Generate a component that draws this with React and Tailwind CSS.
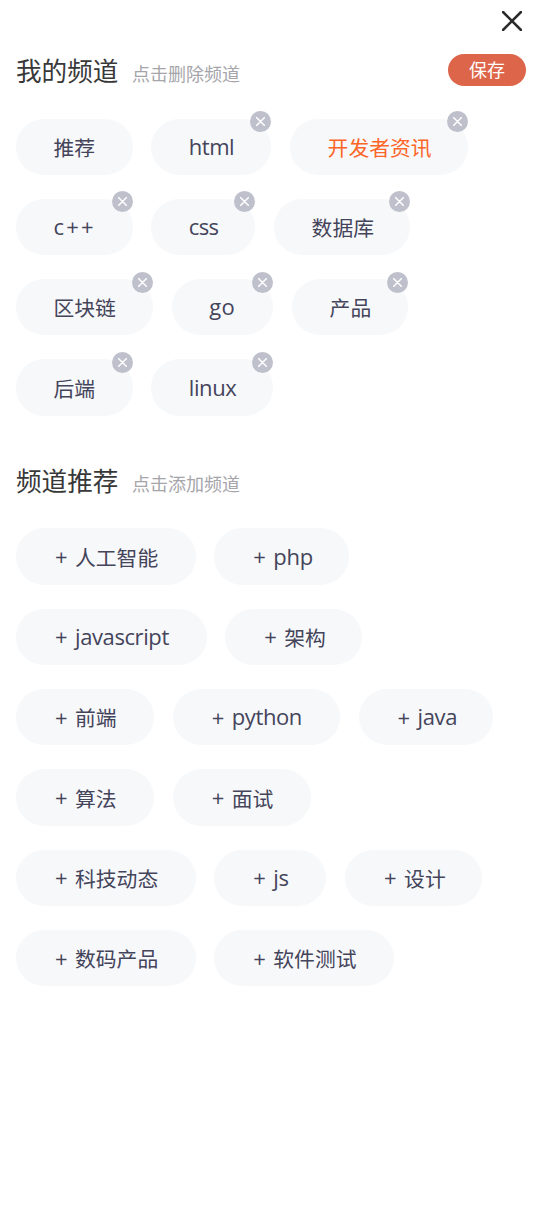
const mine = [
  [
    { name: '推荐', size: 'w-[116.5px]', fixed: true },
    { name: 'html', size: 'w-[120px]', latin: true, track: 'tracking-[-0.5px]' },
    { name: '开发者资讯', size: 'w-[177.5px]', active: true },
  ],
  [
    { name: 'c++', size: 'w-[116.5px]', latin: true, track: 'tracking-[2.2px]' },
    { name: 'css', size: 'w-[104px]', latin: true, track: 'tracking-[-0.6px]' },
    { name: '数据库', size: 'w-[136px]' },
  ],
  [
    { name: '区块链', size: 'w-[137px]' },
    { name: 'go', size: 'w-[101.5px]', latin: true, track: 'tracking-[0.3px]' },
    { name: '产品', size: 'w-[115.5px]' },
  ],
  [
    { name: '后端', size: 'w-[116.5px]' },
    { name: 'linux', size: 'w-[121.5px]', latin: true, track: 'tracking-[-0.4px]' },
  ],
];

const suggested = [
  [
    { name: '人工智能', size: 'w-[179.5px]' },
    { name: 'php', size: 'w-[135px]', latin: true, track: 'tracking-[-0.3px]' },
  ],
  [
    { name: 'javascript', size: 'w-[190.5px]', latin: true, track: 'tracking-[-0.4px]' },
    { name: '架构', size: 'w-[137px]' },
  ],
  [
    { name: '前端', size: 'w-[138px]' },
    { name: 'python', size: 'w-[167px]', latin: true, track: 'tracking-[-0.4px]' },
    { name: 'java', size: 'w-[134.5px]', latin: true, track: 'tracking-[-0.4px]' },
  ],
  [
    { name: '算法', size: 'w-[138px]' },
    { name: '面试', size: 'w-[138px]' },
  ],
  [
    { name: '科技动态', size: 'w-[179.5px]' },
    { name: 'js', size: 'w-[112px]', latin: true, track: 'tracking-[-0.3px]' },
    { name: '设计', size: 'w-[137px]' },
  ],
  [
    { name: '数码产品', size: 'w-[179.5px]' },
    { name: '软件测试', size: 'w-[179.5px]' },
  ],
];

function Cross({ className, width }) {
  return (
    <svg viewBox="0 0 20 20" className={className} fill="none" stroke="currentColor" strokeWidth={width} strokeLinecap="round">
      <path d="M1 1 19 19M19 1 1 19" />
    </svg>
  );
}

function Chip({ item, add }) {
  return (
    <button
      className={`relative flex h-[56.3px] shrink-0 items-center whitespace-nowrap rounded-full bg-[#f7f8fa] pl-[37.5px] text-left ${item.size} ${item.active ? 'text-[#fc6627]' : 'text-[#44445a]'}`}
    >
      {add && <span className="w-[21.5px] shrink-0 pb-px pl-[1.5px] text-[22px] leading-none">+</span>}
      <span className={`${item.latin ? 'pb-[2px] text-[22px]' : 'pt-[3px] text-[20.8px]'} leading-none ${item.track || ''}`}>{item.name}</span>
      {!add && !item.fixed && (
        <span className="absolute -top-[7.5px] right-0 flex size-[21px] items-center justify-center rounded-full bg-[#bec0cb] text-white">
          <Cross className="size-[9px]" width={3.2} />
        </span>
      )}
    </button>
  );
}

function Channels({ rows, add }) {
  return (
    <div className="flex flex-col gap-[24px]">
      {rows.map((row, i) => (
        <div key={i} className="flex gap-[18.8px]">
          {row.map((item) => (
            <Chip key={item.name} item={item} add={add} />
          ))}
        </div>
      ))}
    </div>
  );
}

function Heading({ title, hint }) {
  return (
    <div className="flex items-baseline gap-[13.5px]">
      <h2 className="text-[25.6px] leading-8 text-[#383838]">{title}</h2>
      <span className="text-[18px] leading-8 text-[#a5a5aa]">{hint}</span>
    </div>
  );
}

export default function App() {
  return (
    <div className="h-[1216px] w-[533px] overflow-hidden bg-white font-['Open_Sans','Noto_Sans_CJK_SC',sans-serif] font-normal">
      <header className="flex h-[53px] justify-end pr-[11px] pt-[10.5px] text-[#2b2b2d]">
        <button className="size-5">
          <Cross className="size-5" width={2.5} />
        </button>
      </header>
      <main className="pl-4">
        <section>
          <div className="flex h-[65.5px] items-start justify-between pr-[7px]">
            <div className="pt-[3px]">
              <Heading title="我的频道" hint="点击删除频道" />
            </div>
            <button className="mt-[0.5px] h-[32.5px] w-[78px] rounded-full bg-[#dd6549] text-[18px] leading-[32px] text-white">保存</button>
          </div>
          <Channels rows={mine} />
        </section>
        <section className="pt-[50.5px]">
          <div className="h-[62.3px]">
            <Heading title="频道推荐" hint="点击添加频道" />
          </div>
          <Channels rows={suggested} add />
        </section>
      </main>
    </div>
  );
}
